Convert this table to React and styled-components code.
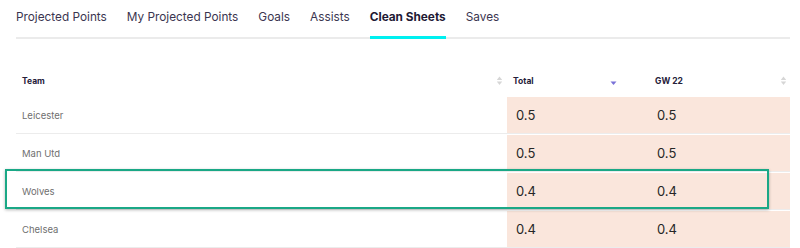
import React from "react";
import styled, { createGlobalStyle } from "styled-components";

const GlobalStyle = createGlobalStyle`
  body {
    margin: 0;
    background: #ffffff;
    font-family: "Inter", "Noto Sans", sans-serif;
  }
`;

const Page = styled.div`
  width: 800px;
  height: 248px;
  overflow: hidden;
  padding: 0 10px 0 16px;
  box-sizing: border-box;
`;

const Tabs = styled.nav`
  display: flex;
  gap: 20px;
  height: 39px;
  border-bottom: 2px solid #ebebeb;
  box-sizing: border-box;
  width: 774px;
`;

const Tab = styled.div`
  display: flex;
  align-items: center;
  height: 39px;
  margin-bottom: -2px;
  padding-bottom: 2px;
  box-sizing: border-box;
  font-size: 11.8px;
  color: ${p => (p.$active ? "#1f1a35" : "#3b3550")};
  font-weight: ${p => (p.$active ? 700 : 400)};
  border-bottom: 3px solid ${p => (p.$active ? "#00f0f0" : "transparent")};
`;

const Table = styled.div`
  position: relative;
  margin-top: 27px;
  width: 774px;
`;

const Row = styled.div`
  display: grid;
  grid-template-columns: 491px 143px 140px;
  height: ${p => (p.$head ? "30px" : "38px")};
  box-sizing: border-box;
  padding-top: ${p => (p.$head ? 0 : 1)}px;
  border-bottom: ${p => (p.$head ? "none" : "1px solid #ececec")};
`;

const Cell = styled.div`
  display: flex;
  align-items: center;
  padding-left: ${p => p.$pad || 6}px;
  background: ${p => (p.$shade ? "#fae6dc" : "transparent")};
  font-size: ${p => (p.$num ? "13px" : "9.5px")};
  color: ${p => (p.$num ? "#262626" : "#6f6f6f")};
`;

const HeadCell = styled.div`
  display: flex;
  align-items: center;
  justify-content: space-between;
  padding-left: ${p => p.$pad || 6}px;
  padding-right: ${p => p.$padRight ?? 4}px;
  font-size: 8.5px;
  font-weight: 700;
  color: #25213a;
`;

const Highlight = styled.div`
  position: absolute;
  left: -11px;
  top: 103px;
  width: 764px;
  height: 40px;
  border: 2px solid #1aa886;
  box-sizing: border-box;
  box-shadow: 0 1px 3px rgba(0, 0, 0, 0.28);
  pointer-events: none;
`;

function SortIcon({ active }) {
  if (active) {
    return (
      <svg width="7" height="10" viewBox="0 0 7 10">
        <path d="M0.5 5.5 L6.5 5.5 L3.5 9 Z" fill="#7a72d8" />
      </svg>
    );
  }
  return (
    <svg width="7" height="10" viewBox="0 0 7 10">
      <path d="M0.8 4 L6.2 4 L3.5 0.6 Z" fill="#d6d6d6" />
      <path d="M0.8 5.6 L6.2 5.6 L3.5 9 Z" fill="#d6d6d6" />
    </svg>
  );
}

const tabs = ["Projected Points", "My Projected Points", "Goals", "Assists", "Clean Sheets", "Saves"];

const rows = [
  { team: "Leicester", total: "0.5", gw: "0.5" },
  { team: "Man Utd", total: "0.5", gw: "0.5" },
  { team: "Wolves", total: "0.4", gw: "0.4" },
  { team: "Chelsea", total: "0.4", gw: "0.4" },
];

export default function App() {
  return (
    <Page>
      <GlobalStyle />
      <Tabs>
        {tabs.map(t => (
          <Tab key={t} $active={t === "Clean Sheets"}>{t}</Tab>
        ))}
      </Tabs>
      <Table>
        <Row $head>
          <HeadCell>
            <span>Team</span>
            <SortIcon />
          </HeadCell>
          <HeadCell $padRight={33}>
            <span>Total</span>
            <SortIcon active />
          </HeadCell>
          <HeadCell $pad={5} $padRight={3}>
            <span>GW 22</span>
            <SortIcon />
          </HeadCell>
        </Row>
        {rows.map(r => (
          <Row key={r.team}>
            <Cell>{r.team}</Cell>
            <Cell $shade $num $pad={9}>{r.total}</Cell>
            <Cell $shade $num $pad={7}>{r.gw}</Cell>
          </Row>
        ))}
        <Highlight />
      </Table>
    </Page>
  );
}
